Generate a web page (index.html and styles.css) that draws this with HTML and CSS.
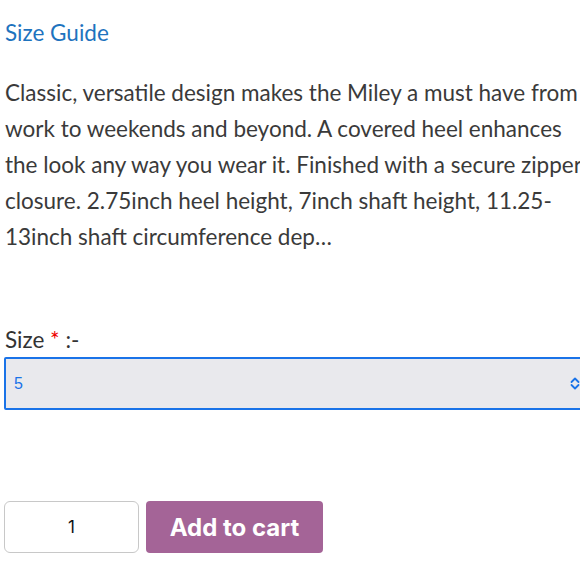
FILE: index.html
```html
<!DOCTYPE html>
<html>
<head>
<meta charset="utf-8">
<link rel="stylesheet" href="styles.css">
</head>
<body>
<div class="page">
  <a class="guide" href="#">Size Guide</a>
  <p class="desc">Classic, versatile design makes the Miley a must have from work to weekends and beyond. A covered heel enhances the look any way you wear it. Finished with a secure zipper closure. 2.75inch heel height, 7inch shaft height, 11.25-13inch shaft circumference dep…</p>
  <div class="field">
    <label class="label">Size <span class="req">*</span> :-</label>
    <div class="select">
      <span class="value">5</span>
      <svg class="arrows" width="10" height="13" viewBox="0 0 10 13"><path d="M1.5 5 L5 1.5 L8.5 5 M1.5 8 L5 11.5 L8.5 8" fill="none" stroke="#1a73e8" stroke-width="1.8" stroke-linecap="round" stroke-linejoin="round"/></svg>
    </div>
  </div>
  <div class="cart">
    <div class="qty">1</div>
    <button class="add">Add to cart</button>
  </div>
</div>
</body>
</html>
```
FILE: styles.css
```css
html, body { margin: 0; padding: 0; overflow: hidden; background: #fff; }
body { font-family: "Lato", "Liberation Sans", sans-serif; color: #333; }
.page { width: 600px; padding: 18px 0 0 5px; }
.guide { display: block; color: #1e73be; text-decoration: none; font-size: 22.5px; line-height: 30px; }
.desc { margin: 27px 0 0; font-size: 22.5px; line-height: 36px; color: #3a3a3a; width: 590px; }
.field { margin-top: 70px; }
.label { display: block; font-size: 22.5px; line-height: 30px; color: #333; }
.req { color: #e00; }
.select { margin: 2px 0 0 -1px; height: 53px; box-sizing: border-box; width: 600px; background: #e9e9ed; border: 2px solid #1a73e8; border-radius: 2px; display: flex; align-items: center; padding-left: 8px; }
.value { font-family: "Liberation Sans", Arial, sans-serif; font-size: 16px; color: #1a73e8; }
.arrows { margin-left: 547px; }
.cart { margin-top: 91px; display: flex; gap: 7px; }
.qty { width: 135px; height: 52px; box-sizing: border-box; border: 1px solid #c8c8c8; border-radius: 6px; margin-left: -1px; display: flex; align-items: center; justify-content: center; font-family: "Inter", sans-serif; font-size: 17px; color: #111; }
.add { width: 177px; height: 52px; background: #a46497; border: none; border-radius: 4px; color: #fff; font-family: "Inter", sans-serif; font-weight: 700; font-size: 24px; padding: 0; }
```
